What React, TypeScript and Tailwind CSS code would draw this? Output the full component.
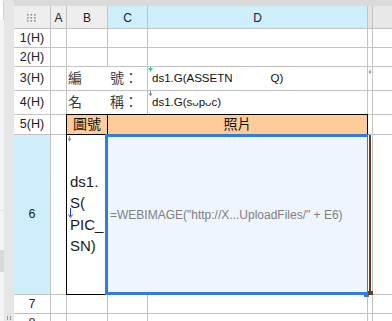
import type { ReactNode } from "react";

const ROW_HEAD = "flex items-center justify-center bg-white text-[12.5px] text-[#222]";
const COL_HEAD = "flex items-center justify-center pt-px text-[12px] text-[#222]";

function Arrow({ color = "#8c8c8c" }: { color?: string }) {
  return (
    <svg width="5" height="6" viewBox="0 0 5 6">
      <path d="M2.5 0V3" stroke={color} strokeWidth="1" />
      <path d="M0.5 2.5H4.5L2.5 5.5Z" fill={color} />
    </svg>
  );
}

function Dots() {
  return (
    <svg width="10" height="8" viewBox="0 0 10 8">
      {[1, 4.5, 8].map((x) =>
        [1, 4, 7].map((y) => <rect key={`${x}-${y}`} x={x - 1} y={y - 1} width="1.6" height="1.6" fill="#8f8f8f" />)
      )}
    </svg>
  );
}

function Blank({ n }: { n: number }) {
  return (
    <>
      {Array.from({ length: n }).map((_, i) => (
        <div key={i} className="bg-white" />
      ))}
    </>
  );
}

function Label({ children }: { children: ReactNode }) {
  return (
    <div className="col-span-2 flex items-center bg-white pl-px text-[14px] text-[#3a3a3a]">{children}</div>
  );
}

export default function App() {
  return (
    <div className="flex h-[321px] w-[392px] overflow-hidden bg-white font-['Liberation_Sans','Noto_Sans_CJK_TC',sans-serif]">
      {/* left edge */}
      <div className="flex w-[4px] flex-col bg-[#f4f4f6]">
        <div className="h-[20px] rounded-tr-[3px] border-r border-[#d0d0d0] bg-white" />
        <div className="mt-[190px] h-px bg-[#e2e2e4]" />
        <div className="mt-[39px] h-[22px] bg-[#d9d9dd]" />
      </div>
      <div className="flex w-[10px] flex-col justify-end bg-[#e6e6e6] pb-[1px]">
        <div className="ml-[3px] flex h-[4px] gap-[2px]">
          <div className="w-px bg-[#9a9a9a]" />
          <div className="w-px bg-[#9a9a9a]" />
        </div>
      </div>

      <div className="flex flex-1 flex-col">
        <div className="h-[6px] shrink-0 bg-[#dadada]" />
        <div className="grid grid-cols-[36px_15px_40px_39px_219px_4px_1fr] grid-rows-[22px_18px_18px_23px_23px_19px_159px_18px_18px] gap-px bg-[#c3c3c3]">
          {/* column headers */}
          <div className="flex items-center justify-center bg-[#eeeeee] pt-px">
            <Dots />
          </div>
          <div className={`${COL_HEAD} bg-[#eeeeee]`}>A</div>
          <div className={`${COL_HEAD} bg-[#eeeeee]`}>B</div>
          <div className={`${COL_HEAD} bg-[#cdeefa]`}>C</div>
          <div className={`${COL_HEAD} bg-[#cdeefa]`}>D</div>
          <div className="bg-[#e3e3e3]" />
          <div className="bg-[#e8e8e8]" />

          {/* row 1 */}
          <div className={ROW_HEAD}>1(H)</div>
          <Blank n={6} />

          {/* row 2 */}
          <div className={ROW_HEAD}>2(H)</div>
          <Blank n={6} />

          {/* row 3 */}
          <div className={ROW_HEAD}>3(H)</div>
          <div className="bg-white" />
          <Label>編　　號：</Label>
          <div className="relative flex items-center bg-white pl-[4px] text-[11.5px] text-[#111]">
            <div className="absolute left-0 top-0">
              <svg width="5" height="6" viewBox="0 0 5 6">
                <path d="M2.5 0V3" stroke="#8c8c8c" strokeWidth="1" />
                <path d="M0 1H5L2.5 5Z" fill="#36d3ad" />
              </svg>
            </div>
            <span>ds1.G(ASSETN</span>
            <span className="inline-block w-[38px]" />
            <span>Q)</span>
          </div>
          <div className="flex justify-center bg-white pt-[2px]">
            <Arrow />
          </div>
          <div className="bg-white" />

          {/* row 4 */}
          <div className={ROW_HEAD}>4(H)</div>
          <div className="bg-white" />
          <Label>名　　稱：</Label>
          <div className="relative flex items-center bg-white pl-[4px] text-[11.5px] text-[#111]">
            <div className="absolute left-0 top-0">
              <Arrow />
            </div>
            <span>ds1.G(s{"\u1D17"}p{"\u1D17"}c)</span>
          </div>
          <Blank n={2} />

          {/* row 5 */}
          <div className={ROW_HEAD}>5(H)</div>
          <div className="bg-white" />
          <div className="flex items-center justify-center bg-[#ffcc99] text-[14px] text-[#111] shadow-[0_0_0_1px_#000]">
            圖號
          </div>
          <div className="col-span-2 flex items-center justify-center bg-[#ffcc99] text-[14px] text-[#111] shadow-[0_0_0_1px_#000]">
            照片
          </div>
          <Blank n={2} />

          {/* row 6 */}
          <div className="flex items-center justify-center bg-[#cdeefa] text-[12.5px] text-[#222]">6</div>
          <div className="bg-white" />
          <div className="relative flex items-center bg-white pl-[3px] text-[15px] leading-[21.5px] text-[#1a1a1a] shadow-[0_0_0_1px_#000]">
            <div className="absolute left-0 top-[1px]">
              <Arrow />
            </div>
            <div className="absolute left-px top-[73px]">
              <svg width="5" height="10" viewBox="0 0 5 10">
                <path d="M2.5 0V8" stroke="#1f3fe8" strokeWidth="1" />
                <path d="M0.5 6.5L2.5 9.5L4.5 6.5" stroke="#1f3fe8" fill="none" strokeWidth="1" />
              </svg>
            </div>
            <div className="pb-[2px]">
              <div>ds1.</div>
              <div>S(</div>
              <div>PIC_</div>
              <div>SN)</div>
            </div>
          </div>
          <div className="relative col-span-2 flex items-center bg-[#eef5fd] pl-[2px] text-[12px] text-[#808080]">
            <span>=WEBIMAGE("http://X...UploadFiles/" + E6)</span>
            <div className="absolute bottom-[-1px] left-[-3px] right-[-2px] top-[-1px] border-[3px] border-r-2 border-[#2f7de1]">
              <div className="absolute bottom-[-5px] right-[-2px] h-[5px] w-[5px] bg-[#2f7de1]" />
            </div>
          </div>
          <div className="relative flex bg-white">
            <div className="ml-px w-[2px] bg-[#6b3d1f]" />
            <div className="absolute bottom-[-1px] left-0 h-[4px] w-[5px] bg-[#6b3d1f]" />
          </div>
          <div className="bg-white" />

          {/* row 7 */}
          <div className={ROW_HEAD}>7</div>
          <Blank n={6} />

          {/* row 8 */}
          <div className={ROW_HEAD}>8</div>
          <Blank n={6} />
        </div>
      </div>
    </div>
  );
}
